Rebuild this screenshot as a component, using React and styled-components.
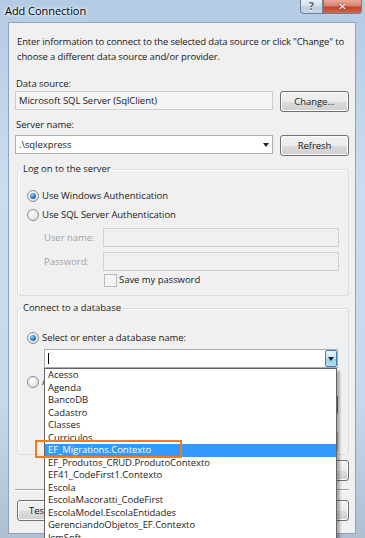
import React from 'react';
import styled, { createGlobalStyle } from 'styled-components';

const GlobalStyle = createGlobalStyle`
    body {
        margin: 0;
        font-family: "Open Sans", "Noto Sans", sans-serif;
        font-size: 9.5px;
        letter-spacing: -0.05px;
        color: #1a1a1a;
    }
`;

const Window = styled.div`
    position: relative;
    width: 365px;
    height: 538px;
    overflow: hidden;
    display: flex;
    flex-direction: column;
    background: linear-gradient(180deg, #b4cbe4 0%, #cbdcee 35%, #c6d8ea 75%, #aebfd0 100%);
`;

const TitleBar = styled.div`
    height: 22px;
    flex: none;
    display: flex;
    justify-content: space-between;
    align-items: flex-start;
`;

const Title = styled.div`
    padding: 4px 0 0 5px;
    font-size: 11px;
    line-height: 13px;
    color: #000;
    text-shadow: 0 0 5px #fff, 0 0 3px #fff;
`;

const Caption = styled.div`
    display: flex;
    margin-right: 3px;
`;

const CaptionButton = styled.div`
    width: ${p => p.$w}px;
    height: 14px;
    box-sizing: border-box;
    border: 1px solid #6d7f96;
    border-top: none;
    border-radius: ${p => p.$radius};
    display: flex;
    align-items: center;
    justify-content: center;
    font-family: "DejaVu Sans", sans-serif;
    font-weight: bold;
    font-size: 10px;
    color: ${p => p.$red ? '#fff' : '#5b6b80'};
    text-shadow: ${p => p.$red ? '0 0 2px #7a1a0a' : '0 1px 0 #fff'};
    background: ${p => p.$red
        ? 'linear-gradient(180deg, #e9a99a 0%, #d98270 45%, #c0442e 55%, #cf6a4c 100%)'
        : 'linear-gradient(180deg, #e6eef7 0%, #d3dfec 45%, #bccbdc 55%, #cad7e6 100%)'};
`;

const Client = styled.div`
    flex: 1;
    margin: 0 9px 4px 8px;
    border: 1px solid #8fa4bc;
    background: #f0f0f0;
    padding: 0 6px;
    display: flex;
    flex-direction: column;
`;

const Intro = styled.p`
    margin: 11px -4px 0 2px;
    line-height: 15px;
    letter-spacing: -0.15px;
`;

const Label = styled.div`
    margin-top: ${p => p.$top}px;
    margin-left: 1px;
    line-height: 14px;
`;

const Row = styled.div`
    display: flex;
    gap: 7px;
    align-items: flex-start;
    height: 21px;
    margin-top: ${p => p.$top || 0}px;
`;

const TextBox = styled.div`
    flex: 1;
    height: 19px;
    box-sizing: border-box;
    border: 1px solid ${p => p.$disabled ? '#d2d2d2' : p.$readonly ? '#cdcdcd' : '#abadb3'};
    background: ${p => p.$readonly ? '#f4f4f4' : p.$disabled ? '#f0f0f0' : '#fff'};
    display: flex;
    align-items: center;
    padding-left: 3px;
    line-height: 17px;
    position: relative;
`;

const ComboText = styled.span`
    flex: 1;
    display: flex;
    align-items: center;
`;

const Arrow = styled.span`
    width: 0;
    height: 0;
    margin-right: ${p => p.$bare ? 3 : 0}px;
    border-left: 3px solid transparent;
    border-right: 3px solid transparent;
    border-top: 4px solid #222;
`;

const ArrowButton = styled.span`
    width: 12px;
    height: 17px;
    box-sizing: border-box;
    border: 1px solid #3c7fb1;
    border-radius: 2px;
    background: linear-gradient(180deg, #e8f6fd 0%, #c4e5f6 50%, #98d1ef 51%, #b2def3 100%);
    display: flex;
    align-items: center;
    justify-content: center;
`;

const Caret = styled.span`
    width: 1px;
    height: 11px;
    background: #000;
`;

const Button = styled.div`
    width: ${p => p.$w || 69}px;
    height: 21px;
    flex: none;
    box-sizing: border-box;
    border: 1px solid #707070;
    border-radius: 3px;
    background: linear-gradient(180deg, #f2f2f2 0%, #ebebeb 50%, #dddddd 51%, #cfcfcf 100%);
    box-shadow: inset 0 0 0 1px #fcfcfc;
    display: flex;
    align-items: center;
    justify-content: center;
    line-height: 12px;
`;

const Group = styled.fieldset`
    margin: ${p => p.$top}px 0 0 2px;
    padding: ${p => p.$pad};
    border: 1px solid #d5dfe5;
    border-radius: 3px;
    min-width: 0;
    display: flex;
    flex-direction: column;
    box-shadow: inset 1px 1px 0 #fff;
`;

const Legend = styled.legend`
    margin-left: 3px;
    padding: 0 2px;
    line-height: 14px;
`;

const Option = styled.label`
    display: flex;
    align-items: center;
    gap: 3px;
    margin-top: ${p => p.$top || 0}px;
    margin-left: 9px;
    line-height: 14px;
`;

const Radio = styled.span`
    width: 12px;
    height: 12px;
    box-sizing: border-box;
    border-radius: 50%;
    border: 1px solid #8e8f8f;
    background: radial-gradient(circle at 40% 35%, #fff 0%, #e6e6e6 60%, #d0d0d0 100%);
    display: flex;
    align-items: center;
    justify-content: center;

    &::after {
        content: '';
        width: 6px;
        height: 6px;
        border-radius: 50%;
        display: ${p => p.$checked ? 'block' : 'none'};
        background: radial-gradient(circle at 35% 30%, #8fd0f5 0%, #2f83c4 50%, #0f4c8a 100%);
    }
`;

const FieldRow = styled.div`
    display: flex;
    align-items: center;
    gap: ${p => p.$gap || 0}px;
    margin-top: ${p => p.$top}px;
    margin-left: ${p => p.$left}px;
    margin-right: ${p => p.$right}px;
`;

const FieldLabel = styled.span`
    width: ${p => p.$w}px;
    color: #a3a3a3;
    line-height: 14px;
`;

const Check = styled.label`
    display: flex;
    align-items: center;
    gap: 2px;
    margin: 2px 0 0 86px;
    line-height: 14px;
`;

const CheckBox = styled.span`
    width: 11px;
    height: 11px;
    border: 1px solid #b8b8b8;
    background: #f4f4f4;
`;

const ComboWrap = styled.div`
    position: relative;
    margin: 4px 10px 0 26px;
    z-index: 2;
`;

const List = styled.ul`
    position: absolute;
    top: 100%;
    left: 0;
    right: 1px;
    margin: 0;
    padding: 0;
    list-style: none;
    background: #fff;
    border: 1px solid #646464;
    box-shadow: 3px 3px 2px rgba(0, 0, 0, 0.28);
`;

const Item = styled.li`
    height: 12.5px;
    line-height: 12.5px;
    padding-left: 3px;
    white-space: nowrap;
    background: ${p => p.$selected ? '#3399ff' : 'transparent'};
    color: ${p => p.$selected ? '#fff' : '#1a1a1a'};
`;

const Highlight = styled.div`
    position: absolute;
    left: -9px;
    top: 91px;
    width: 147px;
    height: 18px;
    box-sizing: border-box;
    border: 2px solid #f07b25;
    pointer-events: none;
`;

const RightRow = styled.div`
    display: flex;
    justify-content: flex-end;
    margin-top: ${p => p.$top}px;
`;

const Separator = styled.div`
    margin-top: 8px;
    height: 0;
    border-top: 1px solid #a0a0a0;
    border-bottom: 1px solid #fff;
`;

const BottomRow = styled.div`
    display: flex;
    gap: 7px;
    margin: 9px 0 0 2px;
`;

const Spacer = styled.div`
    flex: 1;
`;

const databases = [
    'Acesso',
    'Agenda',
    'BancoDB',
    'Cadastro',
    'Classes',
    'Curriculos',
    'EF_Migrations.Contexto',
    'EF_Produtos_CRUD.ProdutoContexto',
    'EF41_CodeFirst1.Contexto',
    'Escola',
    'EscolaMacoratti_CodeFirst',
    'EscolaModel.EscolaEntidades',
    'GerenciandoObjetos_EF.Contexto',
    'JcmSoft',
];

export default function App() {
    return (
        <>
            <GlobalStyle />
            <Window>
                <TitleBar>
                    <Title>Add Connection</Title>
                    <Caption>
                        <CaptionButton $w={23} $radius="0 0 0 4px">?</CaptionButton>
                        <CaptionButton $w={39} $radius="0 0 4px 0" $red>✕</CaptionButton>
                    </Caption>
                </TitleBar>

                <Client>
                    <Intro>
                        Enter information to connect to the selected data source or click "Change" to
                        choose a different data source and/or provider.
                    </Intro>

                    <Label $top={13}>Data source:</Label>
                    <Row>
                        <TextBox $readonly>Microsoft SQL Server (SqlClient)</TextBox>
                        <Button>Change...</Button>
                    </Row>

                    <Label $top={6}>Server name:</Label>
                    <Row $top={3}>
                        <TextBox>
                            <ComboText>.\sqlexpress</ComboText>
                            <Arrow $bare />
                        </TextBox>
                        <Button>Refresh</Button>
                    </Row>

                    {/* Log on to the server */}
                    <Group $top={6} $pad="0 0 8px 0">
                        <Legend>Log on to the server</Legend>
                        <Option $top={13}><Radio $checked />Use Windows Authentication</Option>
                        <Option $top={5}><Radio />Use SQL Server Authentication</Option>
                        <FieldRow $top={6} $left={26} $right={9}>
                            <FieldLabel $w={59}>User name:</FieldLabel>
                            <TextBox $disabled />
                        </FieldRow>
                        <FieldRow $top={5} $left={26} $right={9}>
                            <FieldLabel $w={59}>Password:</FieldLabel>
                            <TextBox $disabled />
                        </FieldRow>
                        <Check><CheckBox />Save my password</Check>
                    </Group>

                    {/* Connect to a database */}
                    <Group $top={5} $pad="0 0 3px 0">
                        <Legend>Connect to a database</Legend>
                        <Option $top={16}><Radio $checked />Select or enter a database name:</Option>
                        <ComboWrap>
                            <TextBox>
                                <ComboText><Caret /></ComboText>
                                <ArrowButton><Arrow /></ArrowButton>
                            </TextBox>
                            <List>
                                {databases.map((name, i) => (
                                    <Item key={name} $selected={i === 6}>{name}</Item>
                                ))}
                            </List>
                            <Highlight />
                        </ComboWrap>
                        <Option $top={7}><Radio />Attach a database file:</Option>
                        <FieldRow $top={5} $left={26} $right={10} $gap={7}>
                            <TextBox />
                            <Button>Browse...</Button>
                        </FieldRow>
                        <FieldRow $top={17} $left={26} $right={10}>
                            <TextBox />
                        </FieldRow>
                    </Group>

                    <RightRow $top={5}>
                        <Button $w={74}>Advanced...</Button>
                    </RightRow>
                    <Separator />
                    <BottomRow>
                        <Button $w={95}>Test Connection</Button>
                        <Spacer />
                        <Button>OK</Button>
                        <Button>Cancel</Button>
                    </BottomRow>
                </Client>
            </Window>
        </>
    );
}
